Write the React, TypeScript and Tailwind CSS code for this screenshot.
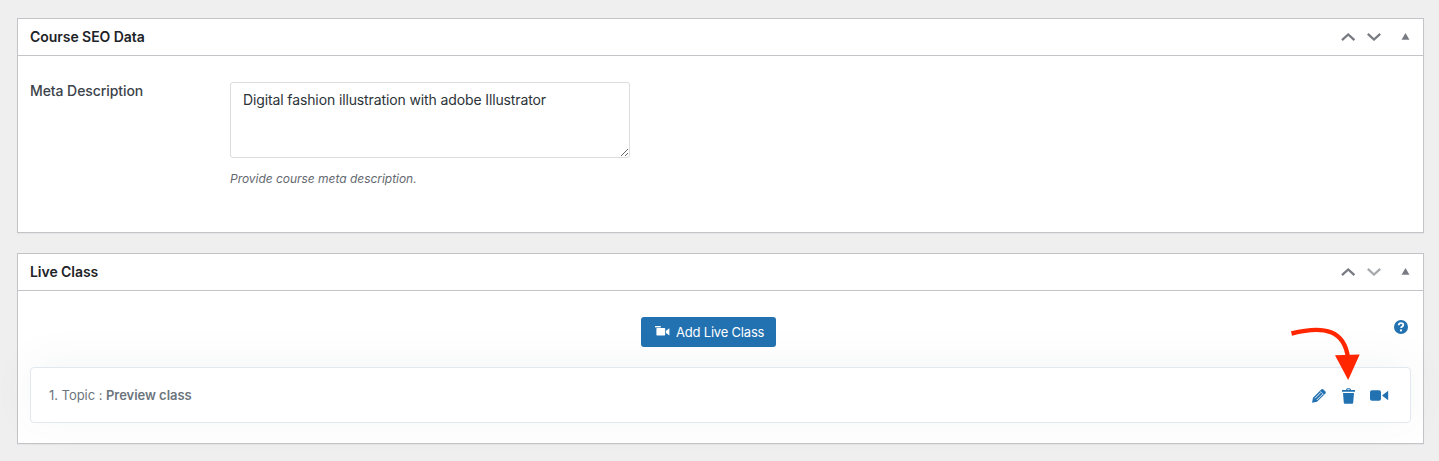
import React from "react";

function PanelHeader({ title, last = false }: { title: string; last?: boolean }) {
  return (
    <div className="flex h-[37px] shrink-0 items-center justify-between border-b border-[#c3c4c7] pl-3 pr-[13px]">
      <h2 className="text-[14px] leading-5 font-semibold tracking-[-0.05px] text-[#1d2327]">{title}</h2>
      <div className="flex items-center text-[#787c82]">
        <svg width="14" height="8" viewBox="0 0 14 8" fill="none" stroke="currentColor" strokeWidth="2.3" className="mr-3">
          <path d="M1 7.1l6.2-5.6 6.2 5.6" />
        </svg>
        <svg width="14" height="8" viewBox="0 0 14 8" fill="none" stroke={last ? "#a7aaad" : "currentColor"} strokeWidth="2.3" className="mr-[20px]">
          <path d="M.8 .9L7 6.5l6.2-5.6" />
        </svg>
        <svg width="9" height="7" viewBox="0 0 9 7" fill="currentColor" className="mb-[2px]">
          <path d="M4.5 0L8.5 6.7H0.5z" />
        </svg>
      </div>
    </div>
  );
}

export default function App() {
  return (
    <main className="relative flex h-[461px] w-full flex-col gap-5 overflow-hidden bg-[#efefef] pt-[18px] pr-[15px] pl-[17px] font-['Inter','Liberation_Sans',sans-serif]">
      <section className="flex h-[215px] flex-col border border-[#c3c4c7] bg-white shadow-[0_1px_1px_rgba(0,0,0,0.04)]">
        <PanelHeader title="Course SEO Data" />
        <div className="flex px-3 pt-[26px]">
          <label htmlFor="meta" className="w-[200px] text-[14px] leading-[18px] font-medium tracking-[-0.08px] text-[#3c434a]">
            Meta Description
          </label>
          <div className="w-[400px]">
            <textarea
              id="meta"
              defaultValue="Digital fashion illustration with adobe Illustrator"
              className="block h-[76px] w-full resize rounded-[3px] border border-[#dcdcde] bg-white px-3 pt-[7px] text-[14px] leading-5 tracking-[-0.12px] text-[#2c3338] outline-none"
            />
            <p className="mt-[12px] text-[12px] leading-[18px] tracking-[-0.03px] text-[#646970] italic">Provide course meta description.</p>
          </div>
        </div>
      </section>

      <section className="flex h-[191px] flex-col border border-[#c3c4c7] bg-white shadow-[0_1px_1px_rgba(0,0,0,0.04)]">
        <PanelHeader title="Live Class" last />
        <div className="flex flex-col px-3">
          <div className="mt-[26px] grid grid-cols-[1fr_auto_1fr] items-start">
            <button className="col-start-2 -ml-[25px] flex h-[30px] w-[135px] items-center rounded-[3px] bg-[#2271b1] pl-[14px] text-[13px] text-white">
              <svg width="15" height="11" viewBox="0 0 15 11" fill="currentColor" className="mr-[6.5px] mb-px shrink-0">
                <path d="M0 0h5.8v1.4H0z" />
                <rect x="1.4" y="2.1" width="8.8" height="7.4" rx=".7" />
                <path d="M14.4 2.2v7.4L11 7.1V4.8z" />
              </svg>
              <span className="pt-[2px] tracking-[-0.2px] whitespace-nowrap">Add Live Class</span>
            </button>
            <svg width="14" height="14" viewBox="0 0 14 14" className="mt-[3px] mr-[3px] justify-self-end">
              <circle cx="7" cy="7" r="7" fill="#2271b1" />
              <path d="M4.7 5.3C4.8 3.9 5.7 3.2 7 3.2s2.3.7 2.3 1.9c0 1.5-2.2 1.4-2.2 3" fill="none" stroke="white" strokeWidth="1.8" />
              <circle cx="7" cy="10.4" r="1.1" fill="white" />
            </svg>
          </div>
          <div className="mt-5 flex h-14 items-center justify-between rounded-[4px] border border-[#e1e8f0] bg-white pr-[21px] pl-[18px] shadow-[0_-4px_44px_rgba(0,90,60,0.055)]">
            <p className="text-[13px] leading-5 tracking-[-0.04px] text-[#6c757d]">
              1. Topic : <strong className="font-semibold">Preview class</strong>
            </p>
            <div className="flex items-center pt-px text-[#2271b1]">
              <svg width="15" height="15" viewBox="0 0 15 15" className="mr-[15px]">
                <path d="M0 14.7l1-4.9L9.2 1.4q1.1-1 2.2 0l2 2q1 1.1 0 2.2L5 13.8z" fill="currentColor" />
                <path d="M3 10.3L8.9 4.4M4.8 12L10.7 6.1" stroke="white" strokeWidth=".9" fill="none" />
                <path d="M8.4 3.3l3.3 3.3" stroke="white" strokeWidth=".6" />
              </svg>
              <svg width="13" height="16" viewBox="0 0 13 16" fill="currentColor" className="mr-[14.5px]">
                <path d="M4 2.2C4 .9 4.7.3 6.5.3S9 .9 9 2.2H7.800c0-.7-.3-.9-1.300-.9s-1.300.2-1.300.9z" />
                <path d="M0 2h13v1.800H0zM1 5h11l-.8 9.800q-.1.9-1 .9H2.800q-.9 0-1-.9z" />
              </svg>
              <svg width="19" height="11" viewBox="0 0 19 11" fill="currentColor" className="mr-[0.5px]">
                <rect x="0" y=".3" width="11" height="10.4" rx="2" />
                <path d="M12 5.5L18.2.7v9.6z" />
              </svg>
            </div>
          </div>
        </div>
      </section>

      <svg className="absolute top-[322px] left-[1288px]" width="76" height="60" viewBox="0 0 76 60">
        <path d="M3.5 11.5C37 3 56.5 8.5 60 36" fill="none" stroke="#ff2600" strokeWidth="4.4" />
        <path d="M47 33.3L71.7 32.6L60.2 58z" fill="#ff2600" />
      </svg>
    </main>
  );
}
